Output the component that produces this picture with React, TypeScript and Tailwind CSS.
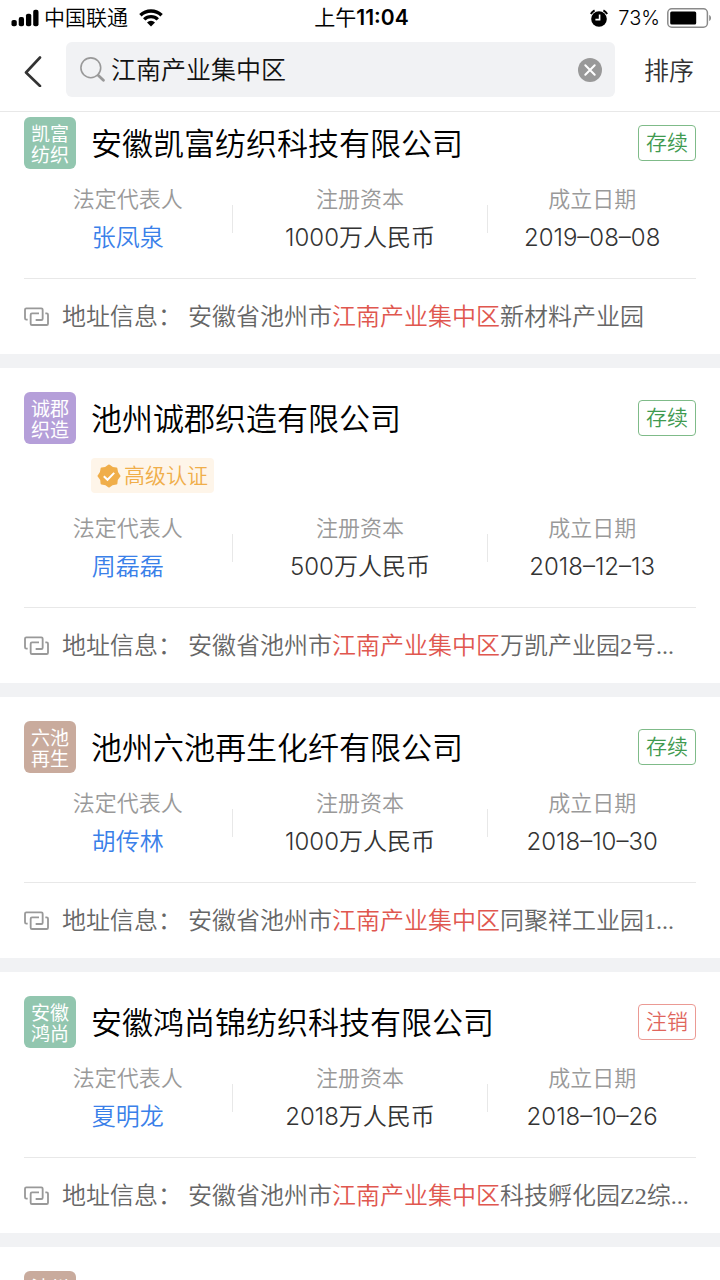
const sans = "font-['Inter','Noto_Sans_CJK_SC',sans-serif]";
const serif = "font-['Liberation_Serif','Noto_Sans_CJK_SC',serif]";

interface Company {
  name: string;
  logo: [string, string];
  color: string;
  status: string;
  certified?: boolean;
  owner: string;
  capital: string;
  founded: string;
  address: [string, string, string];
}

const KEYWORD = "江南产业集中区";

const companies: Company[] = [
  {
    name: "安徽凯富纺织科技有限公司",
    logo: ["凯富", "纺织"],
    color: "bg-[#92c6af]",
    status: "存续",
    owner: "张凤泉",
    capital: "1000万人民币",
    founded: "2019–08–08",
    address: ["安徽省池州市", KEYWORD, "新材料产业园"],
  },
  {
    name: "池州诚郡织造有限公司",
    logo: ["诚郡", "织造"],
    color: "bg-[#b59fd9]",
    status: "存续",
    certified: true,
    owner: "周磊磊",
    capital: "500万人民币",
    founded: "2018–12–13",
    address: ["安徽省池州市", KEYWORD, "万凯产业园2号..."],
  },
  {
    name: "池州六池再生化纤有限公司",
    logo: ["六池", "再生"],
    color: "bg-[#c9ab9d]",
    status: "存续",
    owner: "胡传林",
    capital: "1000万人民币",
    founded: "2018–10–30",
    address: ["安徽省池州市", KEYWORD, "同聚祥工业园1..."],
  },
  {
    name: "安徽鸿尚锦纺织科技有限公司",
    logo: ["安徽", "鸿尚"],
    color: "bg-[#92c6af]",
    status: "注销",
    owner: "夏明龙",
    capital: "2018万人民币",
    founded: "2018–10–26",
    address: ["安徽省池州市", KEYWORD, "科技孵化园Z2综..."],
  },
];

function StatusBar() {
  return (
    <div className="grid h-9 grid-cols-[1fr_auto_1fr] items-center pl-[11px] pr-2 text-[21px] leading-9 text-black">
      <div className="flex items-center">
        <svg width="28" height="18" viewBox="0 0 29 18" aria-hidden="true">
          <rect x="0.5" y="11" width="5.5" height="6.5" rx="2" />
          <rect x="8" y="8" width="5.5" height="9.5" rx="2" />
          <rect x="15.5" y="4.5" width="5.5" height="13" rx="2" />
          <rect x="23" y="0.5" width="5.5" height="17" rx="2" />
        </svg>
        <span className="ml-[5px]">中国联通</span>
        <svg className="ml-[11px]" width="24" height="18" viewBox="0 0 24 18" aria-hidden="true">
          <g fill="none" stroke="#000" strokeWidth="3.4">
            <path d="M1.4 6.2a15.4 15.4 0 0 1 21.2 0" />
            <path d="M5.2 10.4a9.8 9.8 0 0 1 13.6 0" />
          </g>
          <path d="M8 13.4a5.9 5.9 0 0 1 8 0L12 17.6z" />
        </svg>
      </div>
      <span className="font-normal">
        上午<span className="font-semibold">11:04</span>
      </span>
      <div className="flex items-center justify-end">
        <svg width="18" height="19" viewBox="0 0 18 19" aria-hidden="true">
          <circle cx="9" cy="10" r="7.8" />
          <path d="M.8 5a9 9 0 0 1 3.8-3.7M17.2 5a9 9 0 0 0-3.8-3.7" fill="none" stroke="#000" strokeWidth="2" />
          <path d="M9.600 5.400v5.200H5.400" fill="none" stroke="#fff" strokeWidth="1.600" />
        </svg>
        <span className="ml-[10px] text-[20px]">73%</span>
        <svg className="ml-[7px]" width="45" height="20" viewBox="0 0 45 20" aria-hidden="true">
          <rect x="0.8" y="0.8" width="39.6" height="18.4" rx="4" fill="none" stroke="#8a8a8a" strokeWidth="1.5" />
          <rect x="3.2" y="3.4" width="26" height="13.2" rx="1.5" />
          <path d="M42.2 7v6c2.4-.8 2.4-5.2 0-6z" fill="#8a8a8a" />
        </svg>
      </div>
    </div>
  );
}

function SearchHeader() {
  return (
    <div className="flex items-center pb-[14px] pl-6 pr-[26px] pt-[6px]">
      <button type="button" aria-label="返回">
        <svg width="18" height="34" viewBox="0 0 18 34" fill="none" stroke="#333" strokeWidth="2.6" strokeLinecap="round" strokeLinejoin="round">
          <path d="M16 4.500 2 19.500 16 33" />
        </svg>
      </button>
      <div className="ml-6 flex h-[55px] flex-1 items-center rounded-md bg-[#f1f2f4] pl-[14px] pr-[13px]">
        <svg width="25" height="25" viewBox="0 0 25 25" fill="none" stroke="#999" aria-hidden="true">
          <circle cx="10.8" cy="10.8" r="9.9" strokeWidth="1.6" />
          <path d="m18.4 18.4 5 4.8" strokeWidth="2.8" strokeLinecap="round" />
        </svg>
        <input
          type="text"
          aria-label="搜索"
          defaultValue={KEYWORD}
          className="ml-[6px] h-11 min-w-0 flex-1 bg-transparent pb-1 text-[25px] text-[#111] outline-none"
        />
        <button type="button" aria-label="清除">
          <svg width="24" height="24" viewBox="0 0 24 24">
            <circle cx="12" cy="12" r="12" fill="#999" />
            <path d="m7.3 7.3 9.4 9.4m0-9.4-9.4 9.4" stroke="#fff" strokeWidth="2" strokeLinecap="round" />
          </svg>
        </button>
      </div>
      <button type="button" className="ml-[29px] pt-1 text-[25px] text-[#333]">
        排序
      </button>
    </div>
  );
}

function Logo({ lines, color }: { lines: [string, string]; color: string }) {
  return (
    <div className={`flex size-[52px] shrink-0 flex-col items-center justify-center rounded-md pt-[3px] text-[19px] font-normal leading-[21px] text-white ${color}`}>
      <span>{lines[0]}</span>
      <span>{lines[1]}</span>
    </div>
  );
}

function CertifiedTag() {
  return (
    <div className="pb-[5px] pl-[67px] pt-[14px]">
      <div className="flex h-[35px] w-fit items-center rounded bg-[#fef5e9] px-[6px] text-[21px] text-[#f0ae4a]">
        <svg className="mr-[3px]" width="24" height="24" viewBox="0 0 24 24" aria-hidden="true">
          <path
            d="M12 1.5Q14.500 4.500 19.400 4.600Q19.500 9.500 22.500 12Q19.500 14.500 19.400 19.400Q14.500 19.500 12 22.500Q9.500 19.500 4.600 19.400Q4.500 14.500 1.500 12Q4.500 9.500 4.600 4.600Q9.500 4.500 12 1.500z"
            fill="#f0ae4a"
            stroke="#f0ae4a"
            strokeWidth="2"
            strokeLinejoin="round"
          />
          <path d="m6.8 12.2 3.7 3.6 6.7-6.9" fill="none" stroke="#fff" strokeWidth="2" />
        </svg>
        高级认证
      </div>
    </div>
  );
}

function Stat({ label, value, link }: { label: string; value: string; link?: boolean }) {
  return (
    <div className="flex flex-col items-center gap-[7px] leading-8">
      <dt className="text-[22px] text-[#999]">{label}</dt>
      <dd className="text-[24px] text-[#333]">
        {link ? (
          <a href="#" className="text-[#3a80e9]">
            {value}
          </a>
        ) : (
          value
        )}
      </dd>
    </div>
  );
}

function CompanyCard({ company }: { company: Company }) {
  const { name, logo, color, status, certified, owner, capital, founded, address } = company;

  return (
    <li className="bg-white px-6 pt-6">
      <div className="flex items-center">
        <Logo lines={logo} color={color} />
        <h2 className="ml-[15px] h-[52px] flex-1 text-[31px] leading-[54px] text-black">{name}</h2>
        <span
          className={`flex h-9 items-center rounded border px-[7px] text-[21px] ${
            status === "注销" ? "border-[#eb9a94] text-[#e0665d]" : "border-[#7fbb89] text-[#3f9a50]"
          }`}
        >
          {status}
        </span>
      </div>
      {certified && <CertifiedTag />}
      <dl className="mt-[14px] grid grid-cols-[31fr_1px_38fr_1px_31fr] items-center">
        <Stat label="法定代表人" value={owner} link />
        <div className="h-7 bg-[#e8e8e8]" />
        <Stat label="注册资本" value={capital} />
        <div className="h-7 bg-[#e8e8e8]" />
        <Stat label="成立日期" value={founded} />
      </dl>
      <div className="mt-6 flex h-[76px] items-center border-t border-[#e8e8e8]">
        <svg className="shrink-0" width="25" height="20" viewBox="0 0 75 60" fill="none" stroke="#999" strokeWidth="5.5" aria-hidden="true">
          <path d="M11 38H7a4 4 0 0 1-4-4V8a4 4 0 0 1 4-4h45a4 4 0 0 1 4 4v27a4 4 0 0 1-4 4H35" />
          <path d="M45 19H24a4 4 0 0 0-4 4v27a4 4 0 0 0 4 4h44a4 4 0 0 0 4-4V23a4 4 0 0 0-4-4h-4" />
        </svg>
        <p className={`ml-[13px] whitespace-nowrap text-[24px] text-[#666] ${serif}`}>
          <span className="mr-[6px]">地址信息：</span>
          {address[0]}
          <em className="not-italic text-[#e0574f]">{address[1]}</em>
          {address[2]}
        </p>
      </div>
    </li>
  );
}

export default function App() {
  return (
    <div className={`flex h-screen flex-col overflow-hidden bg-[#f1f2f4] font-[350] ${sans}`}>
      <header className="z-10 border-b border-[#e8e8e8] bg-white">
        <StatusBar />
        <SearchHeader />
      </header>
      <main className="min-h-0 flex-1 overflow-hidden">
        <ul className="-mt-[19px] flex flex-col gap-[14px]">
          {companies.map((company) => (
            <CompanyCard key={company.name} company={company} />
          ))}
          <li className="bg-white px-6 pt-6">
            <Logo lines={["池州", "江南"]} color="bg-[#c9ab9d]" />
          </li>
        </ul>
      </main>
    </div>
  );
}
